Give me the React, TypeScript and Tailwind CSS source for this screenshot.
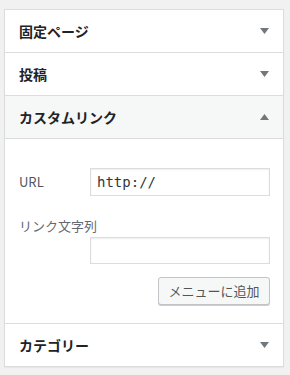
import React from "react";

const jp = '"Noto Sans CJK JP", "Noto Sans", sans-serif';

function Arrow({ up = false }: { up?: boolean }) {
  return (
    <svg width="9" height="6" viewBox="0 0 9 6" className="shrink-0">
      {up ? (
        <polygon points="0,6 9,6 4.5,0" fill="#72777c" />
      ) : (
        <polygon points="0,0 9,0 4.5,6" fill="#72777c" />
      )}
    </svg>
  );
}

function Header({ title, up = false, active = false }: { title: string; up?: boolean; active?: boolean }) {
  return (
    <div
      className={`flex h-[43px] items-center justify-between border-b border-[#dcdcde] pl-[14px] pr-[14px] ${
        active ? "bg-[#f6f7f7]" : "bg-white"
      }`}
    >
      <span className="text-[14px] font-semibold text-[#1d2327]" style={{ fontFamily: jp }}>
        {title}
      </span>
      <Arrow up={up} />
    </div>
  );
}

export default function App() {
  return (
    <div className="h-[375px] w-[290px] bg-[#f1f1f1] pt-[9px] pl-[4px]" style={{ fontFamily: jp }}>
      <div className="w-[280px] border border-b-0 border-[#dcdcde] bg-white shadow-[0_1px_1px_rgba(0,0,0,0.04)]">
        <Header title="固定ページ" />
        <Header title="投稿" />
        <Header title="カスタムリンク" up active />
        <div className="border-b border-[#dcdcde] pl-[14px] pr-[13px] pt-[29px] pb-[18px]">
          <div className="flex items-center">
            <span className="w-[71px] text-[13px] text-[#50575e]" style={{ fontFamily: jp }}>
              URL
            </span>
            <div
              className="flex h-[28px] flex-1 items-center border border-[#dcdcde] bg-white pl-[6px] text-[14px] text-[#32373c] shadow-[inset_0_1px_2px_rgba(0,0,0,0.07)]"
              style={{ fontFamily: '"DejaVu Sans Mono", "Liberation Mono", monospace' }}
            >
              http://
            </div>
          </div>
          <div className="mt-[21px] text-[13px] leading-[18px] text-[#646970]" style={{ fontFamily: jp }}>
            リンク文字列
          </div>
          <div className="mt-[2px] flex">
            <div className="w-[71px]" />
            <div className="h-[27px] flex-1 border border-[#dcdcde] bg-white shadow-[inset_0_1px_2px_rgba(0,0,0,0.07)]" />
          </div>
          <div className="mt-[13px] flex justify-end">
            <div
              className="flex h-[28px] w-[112px] items-center justify-center rounded-[3px] border border-[#c3c4c7] bg-[#f6f7f7] text-[13px] text-[#555] shadow-[0_1px_0_#ccc]"
              style={{ fontFamily: jp }}
            >
              メニューに追加
            </div>
          </div>
        </div>
        <Header title="カテゴリー" />
      </div>
    </div>
  );
}
